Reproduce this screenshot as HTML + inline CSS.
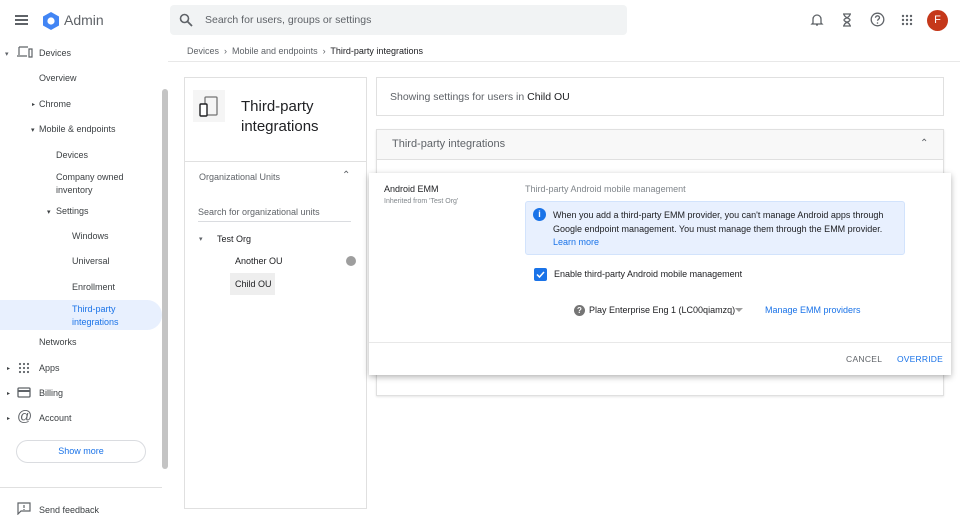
<!DOCTYPE html>
<html><head><meta charset="utf-8"><style>
*{box-sizing:border-box;margin:0;padding:0}
body{width:960px;height:517px;overflow:hidden;background:#fff;font-family:"Liberation Sans",Arial,sans-serif;color:#3c4043;position:relative}
.a{position:absolute}
.nav{font-size:9px;color:#3c4043;position:absolute}
svg{position:absolute}
</style></head><body>
<!-- header -->
<div class="a" style="left:15px;top:15px;width:13px;height:2px;background:#5f6368;box-shadow:0 4px 0 #5f6368,0 8px 0 #5f6368"></div>
<svg style="left:41px;top:11px" width="20" height="20" viewBox="0 0 20 20"><polygon points="10,1 18,5.5 18,14.5 10,19 2,14.5 2,5.5" fill="#4285f4"/><circle cx="10" cy="10" r="3.6" fill="#fff"/></svg>
<div class="a" style="left:64px;top:12px;font-size:14px;color:#5f6368">Admin</div>
<div class="a" style="left:170px;top:5px;width:457px;height:30px;background:#f1f3f4;border-radius:4px"></div>
<svg style="left:179px;top:13px" width="14" height="14" viewBox="0 0 14 14"><circle cx="5.5" cy="5.5" r="4" fill="none" stroke="#5f6368" stroke-width="1.6"/><path d="M8.5 8.5L13 13" stroke="#5f6368" stroke-width="1.8"/></svg>
<div class="a" style="left:205px;top:14px;font-size:10.5px;color:#5f6368">Search for users, groups or settings</div>
<svg style="left:810px;top:13px" width="14" height="14" viewBox="0 0 14 14"><path d="M3 10V6a4 4 0 018 0v4l1 1H2z M6 12h2" fill="none" stroke="#5f6368" stroke-width="1.3"/></svg>
<svg style="left:841px;top:13px" width="12" height="14" viewBox="0 0 12 14"><path d="M2 1h8M2 13h8M3 1c0 4 6 4 6 6s-6 2-6 6M9 1c0 4-6 4-6 6s6 2 6 6" fill="none" stroke="#5f6368" stroke-width="1.3"/></svg>
<svg style="left:870px;top:12px" width="15" height="15" viewBox="0 0 15 15"><circle cx="7.5" cy="7.5" r="6.3" fill="none" stroke="#5f6368" stroke-width="1.3"/><path d="M5.5 5.8a2 2 0 114 0c0 1.3-2 1.5-2 3" fill="none" stroke="#5f6368" stroke-width="1.3"/><circle cx="7.5" cy="11" r=".8" fill="#5f6368"/></svg>
<svg style="left:901px;top:14px" width="12" height="12" viewBox="0 0 12 12" fill="#5f6368"><circle cx="2" cy="2" r="1.2"/><circle cx="6" cy="2" r="1.2"/><circle cx="10" cy="2" r="1.2"/><circle cx="2" cy="6" r="1.2"/><circle cx="6" cy="6" r="1.2"/><circle cx="10" cy="6" r="1.2"/><circle cx="2" cy="10" r="1.2"/><circle cx="6" cy="10" r="1.2"/><circle cx="10" cy="10" r="1.2"/></svg>
<div class="a" style="left:927px;top:10px;width:21px;height:21px;border-radius:50%;background:#c5381a;color:#fff;font-size:11px;text-align:center;line-height:21px">F</div>
<!-- breadcrumb -->
<div class="a" style="left:168px;top:61px;width:792px;height:1px;background:#e8e8e8"></div>
<div class="a" style="left:187px;top:46px;font-size:9px;color:#5f6368">Devices &nbsp;›&nbsp; Mobile and endpoints &nbsp;›&nbsp; <span style="color:#202124">Third-party integrations</span></div>
<!-- left nav -->
<div class="a" style="left:5px;top:50px;font-size:7px;color:#5f6368">▾</div>
<svg style="left:17px;top:46px" width="16" height="12" viewBox="0 0 16 12"><path d="M2 1h9M2 1v8M0 10h10M12 3h3v8h-3z" fill="none" stroke="#5f6368" stroke-width="1.2"/></svg>
<div class="nav" style="left:39px;top:48px">Devices</div>
<div class="nav" style="left:39px;top:73px">Overview</div>
<div class="nav" style="left:32px;font-size:6px;top:101px">▸</div><div class="nav" style="left:39px;top:99px">Chrome</div>
<div class="nav" style="left:31px;top:126px;font-size:7px">▾</div><div class="nav" style="left:39px;top:124px">Mobile &amp; endpoints</div>
<div class="nav" style="left:56px;top:150px">Devices</div>
<div class="nav" style="left:56px;top:171px;line-height:13px">Company owned<br>inventory</div>
<div class="nav" style="left:47px;top:208px;font-size:7px">▾</div><div class="nav" style="left:56px;top:206px">Settings</div>
<div class="nav" style="left:72px;top:231px">Windows</div>
<div class="nav" style="left:72px;top:256px">Universal</div>
<div class="nav" style="left:72px;top:282px">Enrollment</div>
<div class="a" style="left:0;top:300px;width:162px;height:30px;background:#e8f0fe;border-radius:0 15px 15px 0"></div>
<div class="nav" style="left:72px;top:303px;line-height:13px;color:#1a73e8">Third-party<br>integrations</div>
<div class="nav" style="left:39px;top:337px">Networks</div>
<div class="nav" style="left:7px;top:365px;font-size:6px">▸</div>
<svg style="left:18px;top:362px" width="12" height="12" viewBox="0 0 12 12" fill="#5f6368"><circle cx="2" cy="2" r="1.1"/><circle cx="6" cy="2" r="1.1"/><circle cx="10" cy="2" r="1.1"/><circle cx="2" cy="6" r="1.1"/><circle cx="6" cy="6" r="1.1"/><circle cx="10" cy="6" r="1.1"/><circle cx="2" cy="10" r="1.1"/><circle cx="6" cy="10" r="1.1"/><circle cx="10" cy="10" r="1.1"/></svg>
<div class="nav" style="left:39px;top:363px">Apps</div>
<div class="nav" style="left:7px;top:390px;font-size:6px">▸</div>
<svg style="left:17px;top:387px" width="14" height="11" viewBox="0 0 14 11"><rect x="1" y="1" width="12" height="9" rx="1" fill="none" stroke="#5f6368" stroke-width="1.3"/><path d="M1 4h12" stroke="#5f6368" stroke-width="2"/></svg>
<div class="nav" style="left:39px;top:388px">Billing</div>
<div class="nav" style="left:7px;top:415px;font-size:6px">▸</div>
<div class="nav" style="left:17px;top:408px;font-size:15px;color:#5f6368">@</div>
<div class="nav" style="left:39px;top:413px">Account</div>
<div class="a" style="left:16px;top:440px;width:130px;height:23px;border:1px solid #dadce0;border-radius:12px;text-align:center;line-height:21px;font-size:9px;color:#1a73e8">Show more</div>
<div class="a" style="left:162px;top:89px;width:6px;height:380px;background:#c4c4c4;border-radius:3px"></div>
<div class="a" style="left:0;top:487px;width:162px;height:1px;background:#e0e0e0"></div>
<svg style="left:17px;top:502px" width="14" height="13" viewBox="0 0 14 13"><path d="M1 1h12v8H4l-3 3z" fill="none" stroke="#5f6368" stroke-width="1.2"/><path d="M7 3v3M7 7v1" stroke="#5f6368" stroke-width="1.2"/></svg>
<div class="nav" style="left:39px;top:505px">Send feedback</div>
<!-- left card -->
<div class="a" style="left:184px;top:77px;width:183px;height:432px;border:1px solid #e0e0e0;background:#fff"></div>
<div class="a" style="left:193px;top:90px;width:32px;height:32px;background:#f5f5f5"></div>
<svg style="left:199px;top:96px" width="20" height="22" viewBox="0 0 20 22"><rect x="6" y="1" width="12" height="18" rx="1" fill="none" stroke="#757575" stroke-width="1.3"/><rect x="1" y="8" width="7" height="12" rx="1" fill="#fff" stroke="#202124" stroke-width="1.4"/></svg>
<div class="a" style="left:241px;top:97px;font-size:15px;line-height:20px;color:#202124">Third-party<br>integrations</div>
<div class="a" style="left:184px;top:161px;width:183px;height:1px;background:#e0e0e0"></div>
<div class="a" style="left:199px;top:172px;font-size:9px;color:#5f6368">Organizational Units</div>
<div class="a" style="left:342px;top:170px;font-size:10px;color:#5f6368">⌃</div>
<div class="a" style="left:198px;top:207px;font-size:9px;color:#5f6368">Search for organizational units</div>
<div class="a" style="left:198px;top:221px;width:153px;height:1px;background:#dadce0"></div>
<div class="a" style="left:199px;top:235px;font-size:7px;color:#5f6368">▾</div>
<div class="a" style="left:217px;top:234px;font-size:9px;color:#202124">Test Org</div>
<div class="a" style="left:235px;top:256px;font-size:9px;color:#202124">Another OU</div>
<div class="a" style="left:346px;top:256px;width:10px;height:10px;border-radius:50%;background:#9e9e9e"></div>
<div class="a" style="left:230px;top:273px;width:45px;height:22px;background:#eee"></div>
<div class="a" style="left:235px;top:279px;font-size:9px;color:#202124">Child OU</div>
<!-- right cards -->
<div class="a" style="left:376px;top:77px;width:568px;height:39px;border:1px solid #e0e0e0"></div>
<div class="a" style="left:390px;top:91px;font-size:10.5px;color:#5f6368">Showing settings for users in <span style="color:#202124">Child OU</span></div>
<div class="a" style="left:376px;top:129px;width:568px;height:267px;border:1px solid #e0e0e0;box-shadow:0 1px 2px rgba(0,0,0,.1)"></div>
<div class="a" style="left:377px;top:130px;width:566px;height:30px;background:#f8f8f8;border-bottom:1px solid #e0e0e0"></div>
<div class="a" style="left:392px;top:138px;font-size:11px;color:#5f6368">Third-party integrations</div>
<div class="a" style="left:920px;top:138px;font-size:10px;color:#5f6368">⌃</div>
<!-- dialog -->
<div class="a" style="left:369px;top:173px;width:582px;height:202px;background:#fff;box-shadow:0 2px 6px rgba(0,0,0,.3)"></div>
<div class="a" style="left:384px;top:184px;font-size:9px;color:#202124">Android EMM</div>
<div class="a" style="left:384px;top:198px;font-size:7px;color:#80868b">Inherited from 'Test Org'</div>
<div class="a" style="left:525px;top:184px;font-size:9px;color:#80868b">Third-party Android mobile management</div>
<div class="a" style="left:525px;top:201px;width:380px;height:54px;background:#e8f0fe;border:1px solid #d2e3fc;border-radius:3px"></div>
<div class="a" style="left:533px;top:208px;width:13px;height:13px;border-radius:50%;background:#1a73e8;color:#fff;font-size:9px;font-weight:bold;text-align:center;line-height:13px">i</div>
<div class="a" style="left:553px;top:209px;font-size:9px;line-height:13.5px;color:#202124">When you add a third-party EMM provider, you can't manage Android apps through<br>Google endpoint management. You must manage them through the EMM provider.<br><span style="color:#1a73e8">Learn more</span></div>
<div class="a" style="left:534px;top:268px;width:13px;height:13px;border-radius:2px;background:#1a73e8"></div>
<svg style="left:535px;top:269px" width="11" height="11" viewBox="0 0 11 11"><path d="M2 5.5l2.5 2.5L9 3" fill="none" stroke="#fff" stroke-width="1.5"/></svg>
<div class="a" style="left:554px;top:269px;font-size:9px;color:#202124">Enable third-party Android mobile management</div>
<div class="a" style="left:574px;top:305px;width:11px;height:11px;border-radius:50%;background:#757575;color:#fff;font-size:8px;font-weight:bold;text-align:center;line-height:11px">?</div>
<div class="a" style="left:589px;top:305px;font-size:9px;color:#202124">Play Enterprise Eng 1 (LC00qiamzq)</div>
<svg style="left:735px;top:308px" width="8" height="5" viewBox="0 0 8 5"><path d="M0 0h8L4 4z" fill="#9e9e9e"/></svg>
<div class="a" style="left:765px;top:305px;font-size:9px;color:#1a73e8">Manage EMM providers</div>
<div class="a" style="left:369px;top:342px;width:582px;height:1px;background:#e8e8e8"></div>
<div class="a" style="left:846px;top:354px;font-size:8.5px;color:#5f6368;letter-spacing:.3px">CANCEL</div>
<div class="a" style="left:897px;top:354px;font-size:8.5px;color:#1a73e8;letter-spacing:.2px">OVERRIDE</div>
</body></html>
